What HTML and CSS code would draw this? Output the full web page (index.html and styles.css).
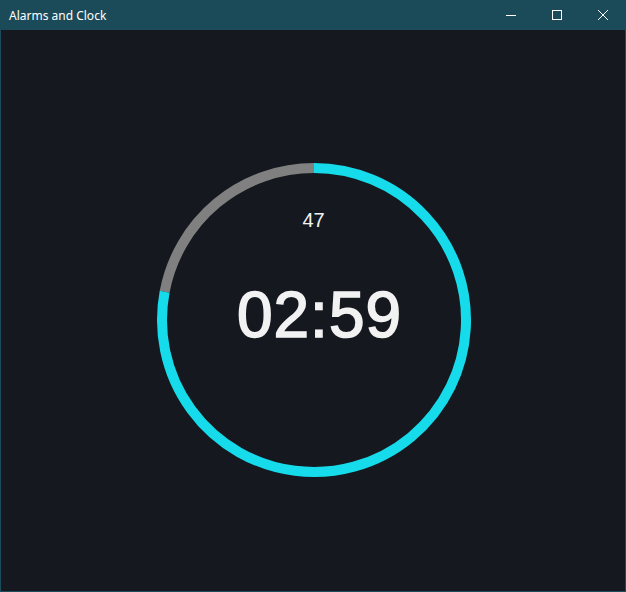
FILE: index.html
```html
<!DOCTYPE html>
<html>
<head>
<meta charset="utf-8">
<link rel="stylesheet" href="styles.css">
</head>
<body>
<div class="window">
  <div class="titlebar">
    <div class="title">Alarms and Clock</div>
    <div class="controls">
      <div class="btn">
        <svg width="10" height="10" viewBox="0 0 10 10"><path d="M0 5.5H10" stroke="#fff" stroke-width="1"/></svg>
      </div>
      <div class="btn">
        <svg width="10" height="10" viewBox="0 0 10 10"><rect x="0.5" y="0.5" width="9" height="9" fill="none" stroke="#fff" stroke-width="1"/></svg>
      </div>
      <div class="btn">
        <svg width="10" height="10" viewBox="0 0 10 10"><path d="M0 0L10 10M10 0L0 10" stroke="#fff" stroke-width="1"/></svg>
      </div>
    </div>
  </div>
  <div class="content">
    <div class="timer">
      <svg class="ring" width="320" height="320" viewBox="0 0 320 320">
        <path d="M 10.64 131.78 A 152 152 0 0 1 160 8" fill="none" stroke="#808080" stroke-width="10"/>
        <path d="M 160 8 A 152 152 0 1 1 10.64 131.78" fill="none" stroke="#16dbea" stroke-width="10"/>
      </svg>
      <div class="readout">
        <div class="seconds">47</div>
        <div class="time">02:59</div>
      </div>
    </div>
  </div>
</div>
</body>
</html>
```

FILE: styles.css
```css
* { box-sizing: border-box; }
html, body {
  margin: 0;
  padding: 0;
  background: #15181f;
}
.window {
  width: 626px;
  height: 592px;
  display: flex;
  flex-direction: column;
  border: 1px solid #1d4c5a;
  border-top: none;
  background: #15181f;
}
.titlebar {
  height: 30px;
  flex: none;
  background: #1b4b59;
  display: flex;
  align-items: center;
  justify-content: space-between;
  margin: 0 -1px;
}
.title {
  color: #ffffff;
  font-family: "Noto Sans", "Open Sans", sans-serif;
  font-size: 12px;
  padding-left: 9px;
  padding-top: 1px;
}
.controls {
  display: flex;
  height: 30px;
}
.btn {
  width: 46px;
  height: 30px;
  display: flex;
  align-items: center;
  justify-content: center;
}
.btn svg { display: block; }
.content {
  flex: 1;
  display: flex;
  justify-content: center;
  padding-top: 129.5px;
}
.timer {
  display: grid;
  width: 320px;
  height: 320px;
  margin-left: 1px;
}
.ring, .readout {
  grid-area: 1 / 1;
}
.ring { display: block; }
.readout {
  display: flex;
  flex-direction: column;
  align-items: center;
  color: #f2f2f2;
  font-family: "Liberation Sans", Arial, sans-serif;
}
.seconds {
  font-size: 20px;
  line-height: 24px;
  margin-top: 48px;
}
.time {
  font-size: 64px;
  line-height: 76px;
  margin-top: 45px;
  padding-left: 12px;
  letter-spacing: 1px;
  -webkit-text-stroke: 1.6px #f2f2f2;
}
```
